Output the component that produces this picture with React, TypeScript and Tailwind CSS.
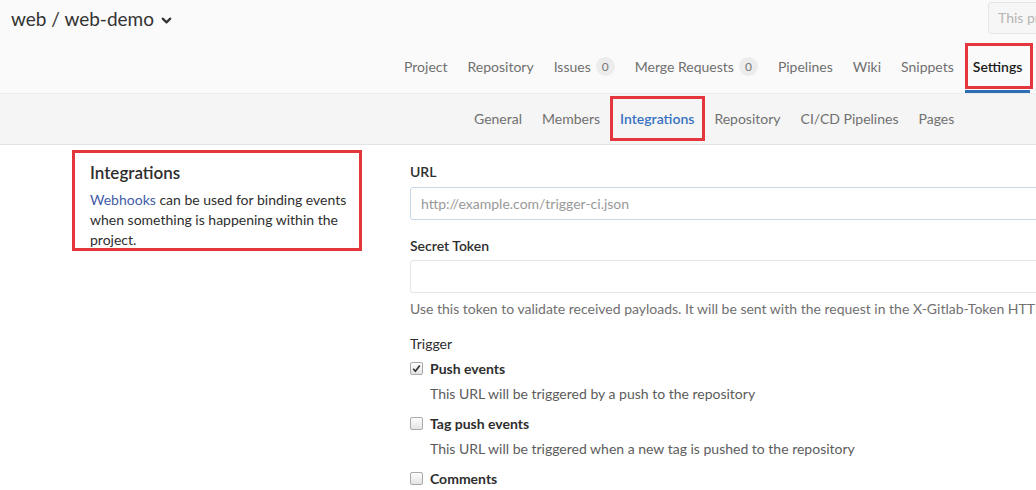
import { ChevronDown } from "lucide-react";

const tabs = [
    { label: "Project" },
    { label: "Repository" },
    { label: "Issues", count: 0 },
    { label: "Merge Requests", count: 0 },
    { label: "Pipelines" },
    { label: "Wiki" },
    { label: "Snippets" },
];

const subTabs = ["General", "Members", "Integrations", "Repository", "CI/CD Pipelines", "Pages"];

function Checkbox({ checked }: { checked?: boolean }) {
    return (
        <span className="w-[13px] h-[13px] rounded-[2px] border border-[#a9a9a9] bg-gradient-to-b from-[#fdfdfd] to-[#e4e4e4] flex items-center justify-center shrink-0">
            {checked && (
                <svg width="9" height="9" viewBox="0 0 9 9">
                    <path d="M1.2 4.8 L3.4 7.2 L7.8 1.4" fill="none" stroke="#333" strokeWidth="1.7" />
                </svg>
            )}
        </span>
    );
}

function TriggerItem({ label, help, checked }: { label: string; help?: string; checked?: boolean }) {
    return (
        <div>
            <div className="flex items-center gap-[7px] h-[25px]">
                <Checkbox checked={checked} />
                <span className="font-bold text-[#2e2e2e]">{label}</span>
            </div>
            {help && <div className="pl-[20px] h-[30px] leading-[25px] text-[#5c5c5c]">{help}</div>}
        </div>
    );
}

export default function App() {
    return (
        <div className="w-[1036px] h-[490px] overflow-hidden bg-white text-[14px] text-[#2e2e2e] font-['Lato','Open_Sans',sans-serif]">
            {/* header */}
            <div className="h-[94px] bg-[#fafafa] border-b border-[#ececec]">
                <div className="flex items-start h-[44px]">
                    <div className="flex items-center gap-[5px] pl-[11px] pt-[5px] text-[19px] text-[#333]">
                        web / web-demo
                        <ChevronDown size={15} strokeWidth={3.5} className="mt-[2px]" />
                    </div>
                    <div className="ml-auto mt-[2px] w-[48px] h-[32px] border border-r-0 border-[#e5e5e5] rounded-l-[4px] bg-[#f6f6f6] overflow-hidden whitespace-nowrap pl-[9px] leading-[30px] text-[#b5b5b5]">
                        This project
                    </div>
                </div>
                <div className="flex items-stretch h-[49px] pl-[394px] whitespace-nowrap">
                    {tabs.map((t) => (
                        <div key={t.label} className="flex items-center px-[10px] pb-[4px] text-[#707070]">
                            {t.label}
                            {t.count !== undefined && (
                                <span className="ml-[5px] h-[19px] min-w-[19px] px-[6px] rounded-full bg-[#ececec] text-[12px] leading-[19px] text-[#777] text-center">
                                    {t.count}
                                </span>
                            )}
                        </div>
                    ))}
                    <div className="relative flex items-center px-[8px] ml-[1px] pb-[2px] border-b-[3px] border-[#2e6db4] text-[#1a1a1a] font-semibold">
                        <span>Settings</span>
                        <span className="absolute left-[0px] top-[-1px] w-[68px] h-[46px] border-[3px] border-[#e3363d]" />
                    </div>
                </div>
            </div>

            {/* sub nav */}
            <div className="h-[51px] bg-[#f5f5f5] border-b border-[#e3e3e3] flex items-stretch pl-[464px] whitespace-nowrap">
                {subTabs.map((s) => (
                    <div key={s} className={`relative flex items-center px-[10px] pb-[2px] ${s === "Integrations" ? "text-[#3871c1] font-semibold" : "text-[#707070]"}`}>
                        {s}
                        {s === "Integrations" && (
                            <span className="absolute left-[0px] top-[2px] w-[95px] h-[45px] border-[3px] border-[#e3363d]" />
                        )}
                    </div>
                ))}
            </div>

            {/* content */}
            <div className="flex pt-[5px]">
                <div className="ml-[72px] w-[290px] shrink-0 h-[101px] border-[3px] border-[#e3363d] pl-[15px] pr-[6px] pt-[8px]">
                    <h4 className="text-[17px] font-semibold text-[#2e2e2e] leading-[24px] mb-[5px]">Integrations</h4>
                    <p className="leading-[20px] text-[#2e2e2e]">
                        <span className="text-[#3f5ca8]">Webhooks</span> can be used for binding events when something is happening within the project.
                    </p>
                </div>
                <div className="ml-[48px] w-[720px] shrink-0 pt-[12px]">
                    <div className="font-semibold leading-[20px] mb-[5px]">URL</div>
                    <div className="h-[33px] border border-[#c6d8ea] rounded-[3px] pl-[10px] leading-[31px] text-[#999]">
                        http://example.com/trigger-ci.json
                    </div>
                    <div className="font-semibold leading-[20px] mt-[16px] mb-[4px]">Secret Token</div>
                    <div className="h-[33px] border border-[#e5e5e5] rounded-[3px]" />
                    <div className="mt-[6px] leading-[20px] text-[#707070] whitespace-nowrap">
                        Use this token to validate received payloads. It will be sent with the request in the X-Gitlab-Token HTTP header.
                    </div>
                    <div className="mt-[15px] leading-[20px] mb-[2px]">Trigger</div>
                    <TriggerItem checked label="Push events" help="This URL will be triggered by a push to the repository" />
                    <TriggerItem label="Tag push events" help="This URL will be triggered when a new tag is pushed to the repository" />
                    <TriggerItem label="Comments" />
                </div>
            </div>
        </div>
    );
}
